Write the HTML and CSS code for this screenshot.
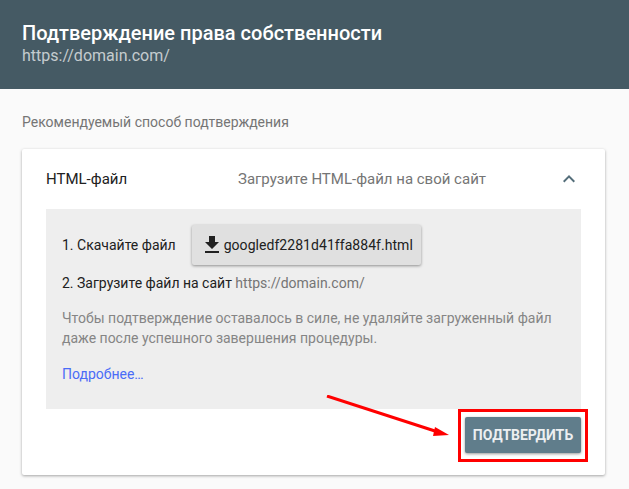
FILE: index.html
```html
<!DOCTYPE html>
<html lang="ru">
<head>
  <meta charset="UTF-8" />
  <title>Подтверждение права собственности</title>
  <link rel="stylesheet" href="styles.css">
</head>
<body>
  <header class="top">
    <h1 class="top-title">Подтверждение права собственности</h1>
    <div class="top-url">https://domain.com/</div>
  </header>

  <main class="content">
    <div class="section-label">Рекомендуемый способ подтверждения</div>

    <section class="card">
      <div class="card-head">
        <div class="method">HTML-файл</div>
        <div class="method-desc">Загрузите HTML-файл на свой сайт</div>
        <svg class="chevron" width="24" height="24" viewBox="0 0 24 24">
          <path d="M7.41 15.41L12 10.83l4.59 4.58L18 14l-6-6-6 6z" fill="#546e7a"/>
        </svg>
      </div>

      <div class="panel">
        <div class="step-one">
          <span>1. Скачайте файл</span>
          <button class="file-btn">
            <svg width="24" height="24" viewBox="0 0 24 24">
              <path d="M19 9h-4V3H9v6H5l7 7 7-7zM5 18v2h14v-2H5z" fill="#212121"/>
            </svg>
            googledf2281d41ffa884f.html
          </button>
        </div>
        <div class="step-two">2. Загрузите файл на сайт <span class="muted">https://domain.com/</span></div>
        <p class="note">Чтобы подтверждение оставалось в силе, не удаляйте загруженный файл даже после успешного завершения процедуры.</p>
        <a class="more" href="#">Подробнее…</a>
      </div>

      <div class="card-foot">
        <button class="verify-btn">ПОДТВЕРДИТЬ</button>
      </div>
    </section>
  </main>

  <!-- red annotation drawn on top of the screenshot -->
  <div class="mark-box"></div>
  <svg class="mark-arrow" width="130" height="48" viewBox="0 0 130 48">
    <line x1="1" y1="1" x2="112" y2="37" stroke="#f00" stroke-width="3"/>
    <path d="M123 40L109 32L107 41z" fill="#f00"/>
  </svg>
</body>
</html>
```

FILE: styles.css
```css
body {
  margin: 0;
  height: 489px;
  overflow: hidden;
  font-family: Roboto, sans-serif;
  background-color: #fafafa;
  color: #212121;
}
.top {
  height: 89px;
  box-sizing: border-box;
  padding: 20px 22px 0;
  background-color: #455a64;
}
.top-title {
  margin: 0;
  font-size: 20px;
  line-height: 26px;
  font-weight: 500;
  color: #fff;
}
.top-url {
  font-size: 16px;
  line-height: 20px;
  color: rgba(255, 255, 255, 0.7);
}
.content {
  padding: 24px 24px 0 22px;
}
.section-label {
  font-size: 14px;
  line-height: 18px;
  color: #757575;
}
.card {
  margin-top: 18px;
  height: 326px;
  background-color: #fff;
  border-radius: 2px;
  box-shadow: 0 1px 3px rgba(0, 0, 0, 0.35);
}
.card-head {
  height: 60px;
  display: flex;
  align-items: center;
  padding: 0 24px;
  font-size: 15px;
}
.method {
  width: 192px;
}
.method-desc {
  flex: 1;
  color: #757575;
}
.chevron {
  display: block;
}
.panel {
  margin: 0 24px;
  height: 200px;
  box-sizing: border-box;
  padding: 16px 16px 0;
  background-color: #eee;
  font-size: 14px;
}
.step-one {
  display: flex;
  align-items: center;
  gap: 16px;
}
.file-btn {
  display: flex;
  align-items: center;
  height: 40px;
  padding: 0 8px;
  border: none;
  border-radius: 2px;
  background-color: #e0e0e0;
  box-shadow: 0 1px 3px rgba(0, 0, 0, 0.4);
  font-family: inherit;
  font-size: 14px;
  font-weight: 400;
  letter-spacing: 0.05px;
  color: #212121;
}
.step-two {
  margin-top: 9px;
  line-height: 18px;
}
.muted {
  color: #757575;
}
.note {
  margin: 16px 0 0;
  line-height: 20px;
  color: #858585;
  width: 500px;
}
.more {
  display: block;
  margin-top: 16px;
  line-height: 20px;
  color: #4a6cf7;
  text-decoration: none;
}
.card-foot {
  display: flex;
  justify-content: flex-end;
  padding: 8px 24px 0;
}
.verify-btn {
  width: 116px;
  height: 36px;
  padding: 0;
  border: none;
  border-radius: 2px;
  background-color: #607d8b;
  box-shadow: 0 1px 3px rgba(0, 0, 0, 0.4);
  font-family: inherit;
  font-size: 14px;
  font-weight: 700;
  color: #eceff1;
}
.mark-box {
  position: absolute;
  left: 458px;
  top: 409px;
  width: 130px;
  height: 53px;
  box-sizing: border-box;
  border: 3px solid #f00;
}
.mark-arrow {
  position: absolute;
  left: 326px;
  top: 395px;
}
```
